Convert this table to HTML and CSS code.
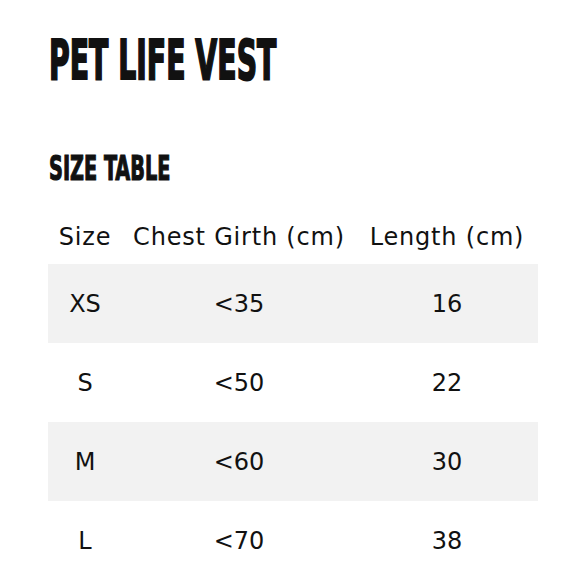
FILE: index.html
```html
<!DOCTYPE html>
<html>
<head>
<meta charset="utf-8">
<link rel="stylesheet" href="styles.css">
</head>
<body>
<div class="page">
  <h1 class="title"><span class="squeeze sq-title">PET LIFE VEST</span></h1>
  <h2 class="subtitle"><span class="squeeze sq-sub">SIZE TABLE</span></h2>
  <table class="sizes">
    <colgroup>
      <col class="c1"><col class="c2"><col class="c3">
    </colgroup>
    <thead>
      <tr><th>Size</th><th>Chest Girth (cm)</th><th>Length (cm)</th></tr>
    </thead>
    <tbody>
      <tr class="shade"><td>XS</td><td>&lt;35</td><td>16</td></tr>
      <tr><td>S</td><td>&lt;50</td><td>22</td></tr>
      <tr class="shade"><td>M</td><td>&lt;60</td><td>30</td></tr>
      <tr><td>L</td><td>&lt;70</td><td>38</td></tr>
    </tbody>
  </table>
</div>
</body>
</html>
```
FILE: styles.css
```css
html, body {
  margin: 0;
  padding: 0;
  background: #ffffff;
}
.page {
  padding: 0 45px 0 48px;
  color: #111111;
}
.title {
  margin: 30px 0 0 0;
  font-family: "DejaVu Sans Condensed", "Liberation Sans", sans-serif;
  font-weight: 700;
  font-size: 56px;
  line-height: 60px;
  white-space: nowrap;
  -webkit-text-stroke: 2px #111111;
}
.subtitle {
  margin: 60px 0 0 0;
  font-family: "DejaVu Sans Condensed", "Liberation Sans", sans-serif;
  font-weight: 700;
  font-size: 34px;
  line-height: 36px;
  white-space: nowrap;
  -webkit-text-stroke: 1.2px #111111;
}
.squeeze {
  display: inline-block;
  transform-origin: 0 50%;
}
.sq-title { transform: translateX(1px) scaleX(0.562); }
.sq-sub { transform: translateX(1px) scaleX(0.63); }
.sizes {
  margin-top: 24px;
  width: 490px;
  border-collapse: collapse;
  table-layout: fixed;
  font-family: "DejaVu Sans", sans-serif;
  font-size: 24px;
  color: #111111;
}
.c1 { width: 74px; }
.c2 { width: 234px; }
.c3 { width: 182px; }
.sizes th {
  font-weight: 400;
  height: 54px;
  padding: 0;
  text-align: center;
  vertical-align: middle;
  letter-spacing: 0.8px;
  white-space: nowrap;
}
.sizes td {
  height: 79px;
  padding: 0;
  text-align: center;
  vertical-align: middle;
}
.sizes tr.shade td {
  background: #f2f2f2;
}
```
